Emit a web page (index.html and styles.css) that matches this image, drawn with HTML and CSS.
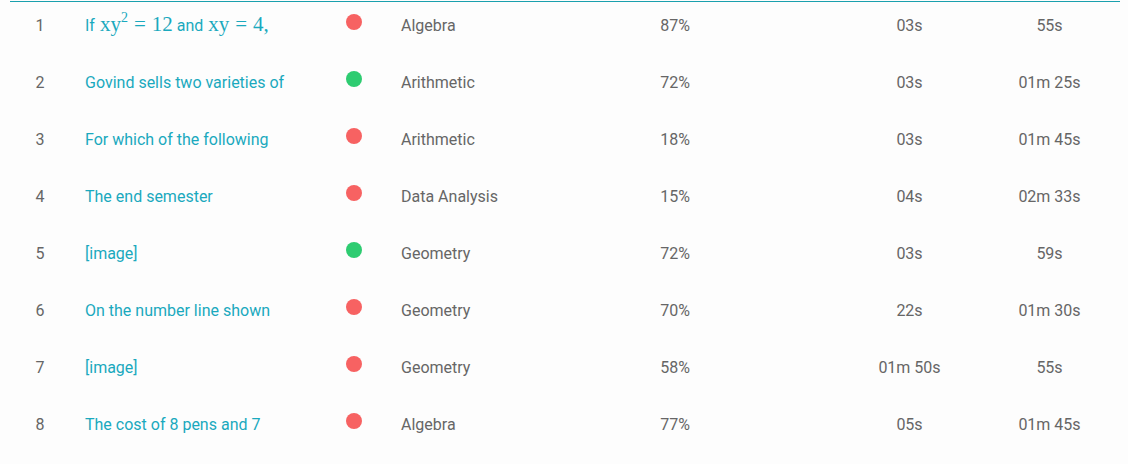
FILE: index.html
```html
<!DOCTYPE html>
<html>
<head>
<meta charset="utf-8">
<link rel="stylesheet" href="styles.css">
</head>
<body>
<div class="list">
  <div class="row">
    <div class="num">1</div>
    <div class="q"><a>If <span class="math">xy<sup>2</sup><span class="eq">=</span>12</span> and <span class="math">xy<span class="eq">=</span>4,</span></a></div>
    <div class="st"><span class="dot red"></span></div>
    <div class="topic">Algebra</div>
    <div class="pct">87%</div>
    <div class="time">03s</div>
    <div class="total">55s</div>
  </div>
  <div class="row">
    <div class="num">2</div>
    <div class="q"><a>Govind sells two varieties of</a></div>
    <div class="st"><span class="dot green"></span></div>
    <div class="topic">Arithmetic</div>
    <div class="pct">72%</div>
    <div class="time">03s</div>
    <div class="total">01m 25s</div>
  </div>
  <div class="row">
    <div class="num">3</div>
    <div class="q"><a>For which of the following</a></div>
    <div class="st"><span class="dot red"></span></div>
    <div class="topic">Arithmetic</div>
    <div class="pct">18%</div>
    <div class="time">03s</div>
    <div class="total">01m 45s</div>
  </div>
  <div class="row">
    <div class="num">4</div>
    <div class="q"><a>The end semester</a></div>
    <div class="st"><span class="dot red"></span></div>
    <div class="topic">Data Analysis</div>
    <div class="pct">15%</div>
    <div class="time">04s</div>
    <div class="total">02m 33s</div>
  </div>
  <div class="row">
    <div class="num">5</div>
    <div class="q"><a>[image]</a></div>
    <div class="st"><span class="dot green"></span></div>
    <div class="topic">Geometry</div>
    <div class="pct">72%</div>
    <div class="time">03s</div>
    <div class="total">59s</div>
  </div>
  <div class="row">
    <div class="num">6</div>
    <div class="q"><a>On the number line shown</a></div>
    <div class="st"><span class="dot red"></span></div>
    <div class="topic">Geometry</div>
    <div class="pct">70%</div>
    <div class="time">22s</div>
    <div class="total">01m 30s</div>
  </div>
  <div class="row">
    <div class="num">7</div>
    <div class="q"><a>[image]</a></div>
    <div class="st"><span class="dot red"></span></div>
    <div class="topic">Geometry</div>
    <div class="pct">58%</div>
    <div class="time">01m 50s</div>
    <div class="total">55s</div>
  </div>
  <div class="row">
    <div class="num">8</div>
    <div class="q"><a>The cost of 8 pens and 7</a></div>
    <div class="st"><span class="dot red"></span></div>
    <div class="topic">Algebra</div>
    <div class="pct">77%</div>
    <div class="time">05s</div>
    <div class="total">01m 45s</div>
  </div>
</div>
</body>
</html>
```
FILE: styles.css
```css
html, body {
  margin: 0;
  padding: 0;
  background: #fdfdfd;
}
body {
  font-family: Roboto, "Liberation Sans", sans-serif;
  font-size: 16px;
  color: #666;
}
.list {
  margin: 1px 8px 0 10px;
  border-top: 1px solid #1aa0ae;
}
.row {
  display: grid;
  grid-template-columns: 60px 260px 48px 132px 330px 139px 141px;
  height: 57px;
  box-sizing: border-box;
  padding-top: 11px;
  line-height: 25px;
}
.num, .pct, .time, .total {
  text-align: center;
}
.q {
  padding-left: 15px;
  white-space: nowrap;
}
.q a {
  color: #1aa9be;
  text-decoration: none;
}
.math {
  font-family: "Liberation Serif", serif;
  font-size: 21px;
  line-height: 20px;
  margin-left: 1px;
}
.math sup {
  font-size: 14px;
  line-height: 0;
  vertical-align: 9px;
}
.eq {
  margin: 0 6px;
}
.st {
  display: flex;
  justify-content: center;
  align-items: flex-start;
}
.dot {
  width: 16px;
  height: 16px;
  border-radius: 50%;
  margin-top: 1px;
}
.red { background: #f76262; }
.green { background: #2ecc71; }
.topic {
  padding-left: 23px;
  white-space: nowrap;
}
```
